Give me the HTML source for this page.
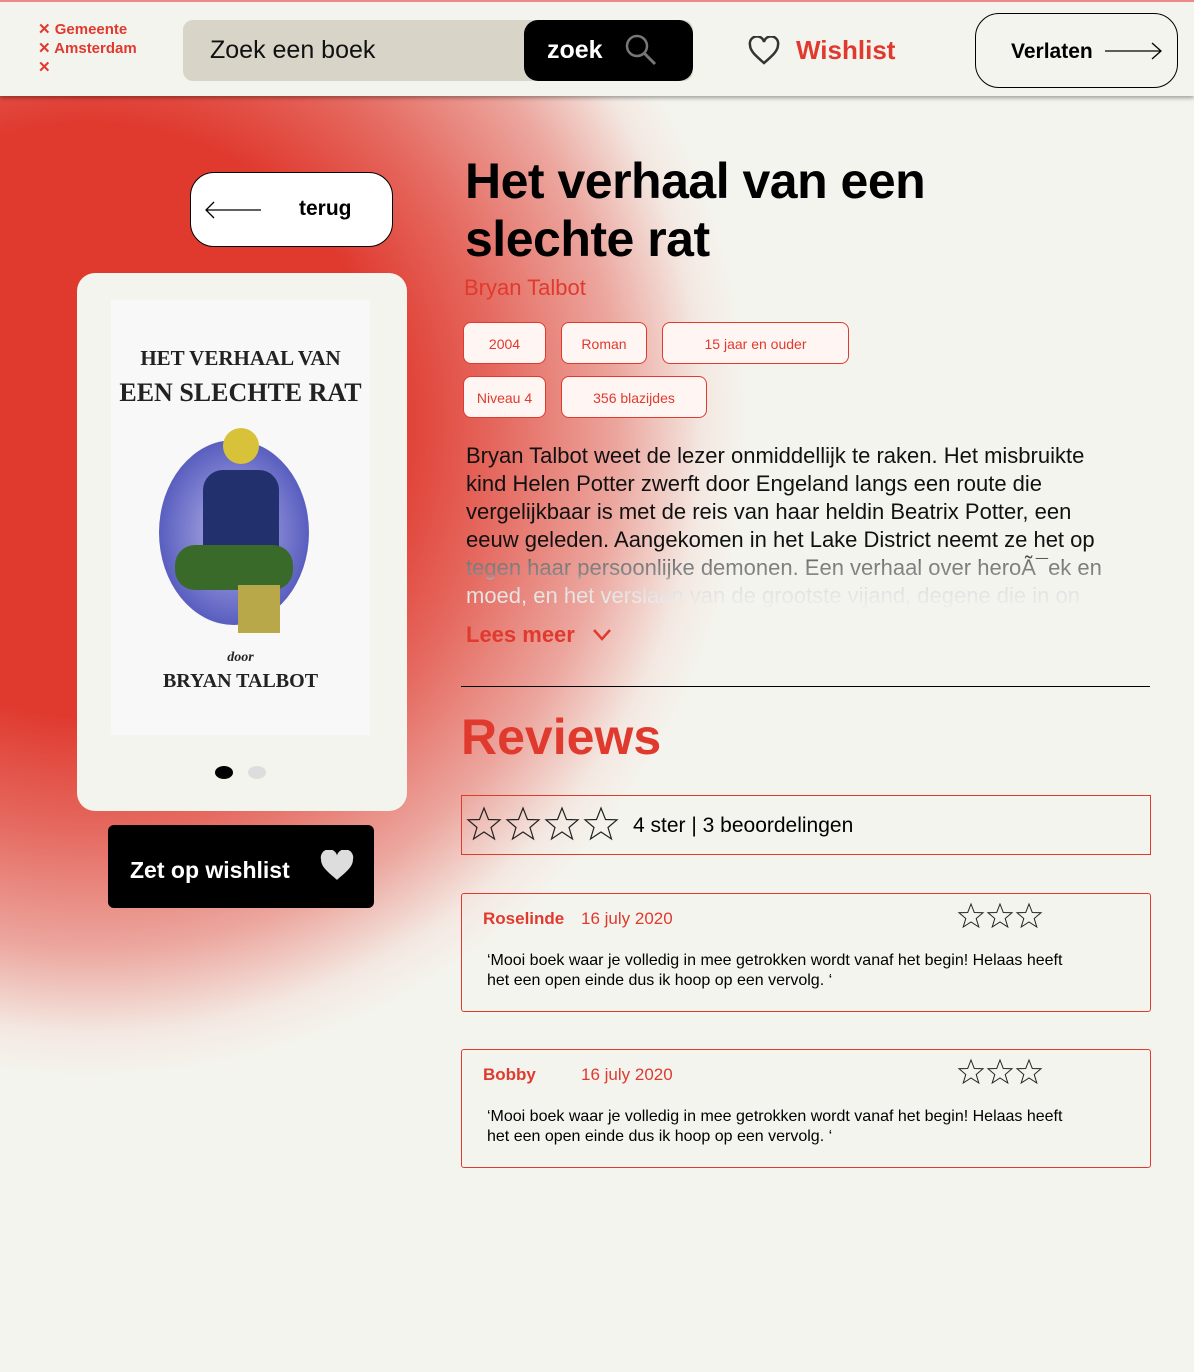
<!DOCTYPE html>
<html><head><meta charset="utf-8"><style>
*{box-sizing:border-box;margin:0;padding:0}
body{width:1194px;height:1372px;position:relative;overflow:hidden;font-family:"Liberation Sans",sans-serif;background:#f4f4ee;color:#000}
.bg{position:absolute;left:-570px;top:-240px;width:1320px;height:1320px;border-radius:50%;background:radial-gradient(circle closest-side,#e03a2f 0%,#e03a2f 45%,rgba(224,58,47,.75) 62%,rgba(224,58,47,.42) 80%,rgba(240,180,170,.18) 93%,rgba(244,244,238,0) 100%)}
header{position:absolute;left:0;top:0;width:1194px;height:96px;background:#f4f4ee;box-shadow:0 2px 4px rgba(0,0,0,.35);border-top:2px solid #e88;}
.abs{position:absolute}
.logo{left:38px;top:18px;color:#e03a2f;font-weight:bold;font-size:15px;line-height:19px}
.search{left:183px;top:18px;width:510px;height:61px;background:#d8d4c8;border-radius:10px}
.search span{position:absolute;left:27px;top:16px;font-size:25px;color:#111}
.zoek{position:absolute;right:0;top:0;width:169px;height:61px;background:#000;border-radius:14px;color:#fff;font-size:25px;font-weight:bold;padding:16px 0 0 23px}
.tag{position:absolute;height:42px;border:1px solid #e03a2f;border-radius:8px;color:#e03a2f;font-size:14px;text-align:center;line-height:42px;background:#fff5f2}
.rev{position:absolute;left:461px;width:690px;height:119px;border:1px solid #e03a2f;border-radius:3px}
.rev b{position:absolute;left:21px;top:15px;color:#e03a2f;font-size:17px}
.rev i{position:absolute;left:119px;top:15px;font-style:normal;color:#e03a2f;font-size:17px}
.rev p{position:absolute;left:25px;top:57px;width:600px;font-size:16px;line-height:20px}
.rev .s{position:absolute;left:495px;top:8px}
.desc{left:466px;top:442px;width:655px;height:166px;overflow:hidden;font-size:22px;line-height:28px;background:linear-gradient(#111 0,#111 66%,#777 72%,#888 80%,#ddd 86%,#eee 100%);-webkit-background-clip:text;background-clip:text;color:transparent}
</style></head><body>
<div class="bg"></div>
<header>
<div class="abs logo">✕ Gemeente<br>✕ Amsterdam<br>✕</div>
<div class="abs search"><span>Zoek een boek</span><div class="zoek">zoek
<svg style="position:absolute;left:100px;top:13px" width="34" height="34" viewBox="0 0 34 34"><circle cx="13" cy="13" r="10" fill="none" stroke="#777" stroke-width="2.5"/><line x1="20" y1="20" x2="31" y2="31" stroke="#777" stroke-width="3"/></svg></div></div>
<svg class="abs" style="left:748px;top:34px" width="32" height="30" viewBox="0 0 32 30"><path d="M16 27C8 20 2 15 2 9A7 7 0 0 1 16 6A7 7 0 0 1 30 9C30 15 24 20 16 27Z" fill="none" stroke="#333" stroke-width="2.5"/></svg>
<div class="abs" style="left:796px;top:33px;color:#e03a2f;font-weight:bold;font-size:26px">Wishlist</div>
<div class="abs" style="left:975px;top:11px;width:203px;height:75px;border:1px solid #000;border-radius:24px;font-size:21px;font-weight:bold;padding:26px 0 0 35px">Verlaten
<svg style="position:absolute;left:128px;top:27px" width="60" height="20"><path d="M1 10H57M48 2L57 10L48 18" fill="none" stroke="#000" stroke-width="1.3"/></svg></div>
</header>
<div class="abs" style="left:190px;top:172px;width:203px;height:75px;border:1px solid #000;border-radius:24px;background:#fff;font-size:21px;font-weight:bold;padding:24px 0 0 108px">terug
<svg style="position:absolute;left:12px;top:27px" width="60" height="20"><path d="M58 10H3M11 2L3 10L11 18" fill="none" stroke="#000" stroke-width="1.3"/></svg></div>
<div class="abs" style="left:77px;top:273px;width:330px;height:538px;background:#f4f4ee;border-radius:18px"></div>
<div class="abs" style="left:111px;top:300px;width:259px;height:435px;background:#f8f8f8;text-align:center;font-family:'Liberation Serif',serif;font-weight:bold;color:#222">
<div style="position:absolute;top:46px;width:100%;font-size:21px">HET VERHAAL VAN</div>
<div style="position:absolute;top:78px;width:100%;font-size:26px">EEN SLECHTE RAT</div>
<div style="position:absolute;left:48px;top:140px;width:150px;height:185px;border-radius:50%;background:radial-gradient(#b8b6e8,#5a5fc0 70%,rgba(90,95,192,0.2))"></div>
<div style="position:absolute;left:112px;top:128px;width:36px;height:36px;border-radius:50%;background:#d8c23a"></div>
<div style="position:absolute;left:92px;top:170px;width:76px;height:110px;background:#23306e;border-radius:20px 20px 4px 4px"></div>
<div style="position:absolute;left:64px;top:245px;width:118px;height:45px;background:#3a6a2a;border-radius:20px"></div>
<div style="position:absolute;left:127px;top:285px;width:42px;height:48px;background:#b8a84a"></div>
<div style="position:absolute;top:350px;width:100%;font-size:14px;font-style:italic">door</div>
<div style="position:absolute;top:370px;width:100%;font-size:20px">BRYAN TALBOT</div>
</div>
<div class="abs" style="left:215px;top:766px;width:18px;height:13px;border-radius:50%;background:#000"></div>
<div class="abs" style="left:248px;top:766px;width:18px;height:13px;border-radius:50%;background:#ddd"></div>
<div class="abs" style="left:108px;top:825px;width:266px;height:83px;background:#000;border-radius:6px;color:#fff;font-weight:bold;font-size:23px;padding:32px 0 0 22px">Zet op wishlist
<svg style="position:absolute;left:212px;top:25px" width="34" height="32" viewBox="0 0 32 30"><path d="M16 28C8 21 1 16 1 9A7.5 7.5 0 0 1 16 5A7.5 7.5 0 0 1 31 9C31 16 24 21 16 28Z" fill="#ddd"/></svg></div>

<div class="abs" style="left:465px;top:152px;font-size:50px;font-weight:bold;line-height:58px;letter-spacing:-0.5px">Het verhaal van een<br>slechte rat</div>
<div class="abs" style="left:464px;top:275px;font-size:22px;color:#e03a2f">Bryan Talbot</div>
<div class="tag" style="left:463px;top:322px;width:83px">2004</div>
<div class="tag" style="left:561px;top:322px;width:86px">Roman</div>
<div class="tag" style="left:662px;top:322px;width:187px">15 jaar en ouder</div>
<div class="tag" style="left:463px;top:376px;width:83px">Niveau 4</div>
<div class="tag" style="left:561px;top:376px;width:146px">356 blazijdes</div>
<div class="abs desc">Bryan Talbot weet de lezer onmiddellijk te raken. Het misbruikte kind Helen Potter zwerft door Engeland langs een route die vergelijkbaar is met de reis van haar heldin Beatrix Potter, een eeuw geleden. Aangekomen in het Lake District neemt ze het op tegen haar persoonlijke demonen. Een verhaal over heroÃ¯ek en moed, en het verslaan van de grootste vijand, degene die in on</div>
<div class="abs" style="left:466px;top:622px;font-size:22px;font-weight:bold;color:#e03a2f">Lees meer
<svg style="position:absolute;left:126px;top:6px" width="20" height="14"><path d="M2 2L10 11L18 2" fill="none" stroke="#e03a2f" stroke-width="2.5"/></svg></div>
<div class="abs" style="left:461px;top:686px;width:689px;height:1px;background:#000"></div>
<div class="abs" style="left:461px;top:708px;font-size:50px;font-weight:bold;color:#e03a2f">Reviews</div>
<div class="abs" style="left:461px;top:795px;width:690px;height:60px;border:1px solid #e03a2f">
<svg style="position:absolute;left:4px;top:10px" width="160" height="36" viewBox="0 0 160 36"><g fill="none" stroke="#222" stroke-width="1.2">
<path d="M18 2L22.5 13.5L34 13.8L25 21.5L28.5 33L18 26L7.5 33L11 21.5L2 13.8L13.5 13.5Z"/>
<path transform="translate(39 0)" d="M18 2L22.5 13.5L34 13.8L25 21.5L28.5 33L18 26L7.5 33L11 21.5L2 13.8L13.5 13.5Z"/>
<path transform="translate(78 0)" d="M18 2L22.5 13.5L34 13.8L25 21.5L28.5 33L18 26L7.5 33L11 21.5L2 13.8L13.5 13.5Z"/>
<path transform="translate(117 0)" d="M18 2L22.5 13.5L34 13.8L25 21.5L28.5 33L18 26L7.5 33L11 21.5L2 13.8L13.5 13.5Z"/></g></svg>
<div style="position:absolute;left:171px;top:18px;font-size:21px">4 ster | 3 beoordelingen</div></div>
<div class="rev" style="top:893px"><b>Roselinde</b><i>16 july 2020</i>
<svg class="s" width="86" height="28" viewBox="0 0 86 28"><g fill="none" stroke="#222" stroke-width="1"><path d="M14 2L17.3 10.5L26 10.7L19.2 16.5L21.8 25L14 20L6.2 25L8.8 16.5L2 10.7L10.7 10.5Z"/><path transform="translate(29 0)" d="M14 2L17.3 10.5L26 10.7L19.2 16.5L21.8 25L14 20L6.2 25L8.8 16.5L2 10.7L10.7 10.5Z"/><path transform="translate(58 0)" d="M14 2L17.3 10.5L26 10.7L19.2 16.5L21.8 25L14 20L6.2 25L8.8 16.5L2 10.7L10.7 10.5Z"/></g></svg>
<p>‘Mooi boek waar je volledig in mee getrokken wordt vanaf het begin! Helaas heeft het een open einde dus ik hoop op een vervolg. ‘</p></div>
<div class="rev" style="top:1049px"><b>Bobby</b><i>16 july 2020</i>
<svg class="s" width="86" height="28" viewBox="0 0 86 28"><g fill="none" stroke="#222" stroke-width="1"><path d="M14 2L17.3 10.5L26 10.7L19.2 16.5L21.8 25L14 20L6.2 25L8.8 16.5L2 10.7L10.7 10.5Z"/><path transform="translate(29 0)" d="M14 2L17.3 10.5L26 10.7L19.2 16.5L21.8 25L14 20L6.2 25L8.8 16.5L2 10.7L10.7 10.5Z"/><path transform="translate(58 0)" d="M14 2L17.3 10.5L26 10.7L19.2 16.5L21.8 25L14 20L6.2 25L8.8 16.5L2 10.7L10.7 10.5Z"/></g></svg>
<p>‘Mooi boek waar je volledig in mee getrokken wordt vanaf het begin! Helaas heeft het een open einde dus ik hoop op een vervolg. ‘</p></div>
</body></html>
